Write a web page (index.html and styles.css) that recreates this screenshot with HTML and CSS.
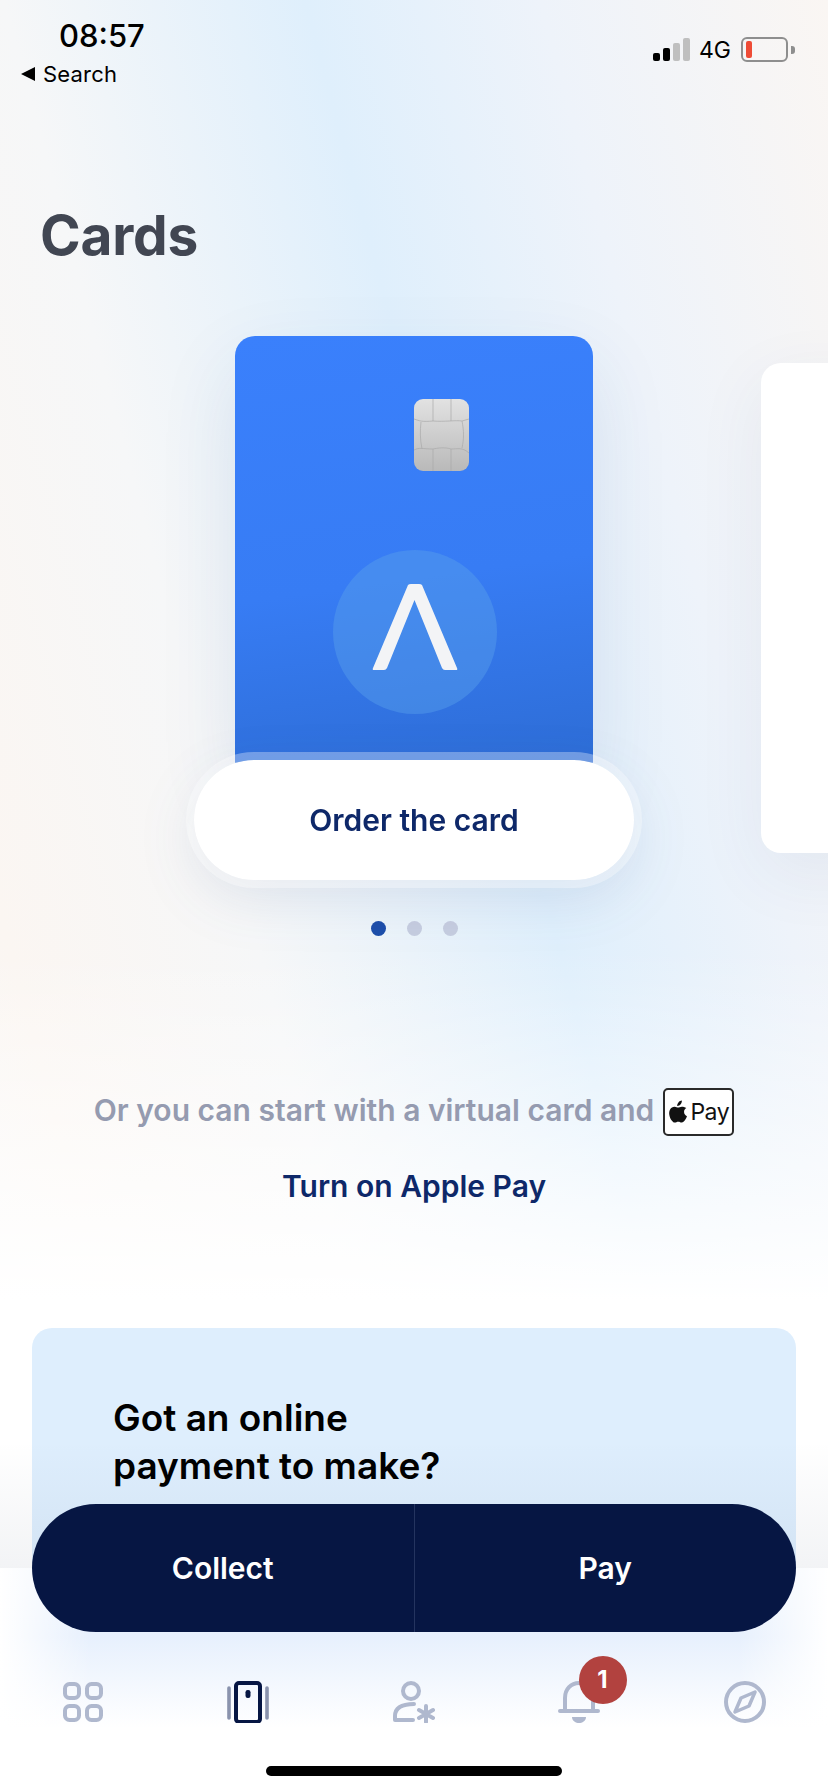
FILE: index.html
```html
<!DOCTYPE html>
<html lang="en">
<head>
<meta charset="UTF-8">
<meta name="viewport" content="width=device-width, initial-scale=1.0">
<title>Cards</title>
<link rel="stylesheet" href="styles.css">
</head>
<body>
<div class="screen">
  <header class="statusBar">
    <div class="statusLeft">
      <div class="clock">08:57</div>
      <div class="backLink"><span class="backArrow"></span>Search</div>
    </div>
    <div class="statusRight">
      <div class="signal">
        <span class="bar on b1"></span><span class="bar on b2"></span><span class="bar b3"></span><span class="bar b4"></span>
      </div>
      <span class="network">4G</span>
      <div class="battery"><span class="batteryFill"></span></div>
      <span class="batteryNub"></span>
    </div>
  </header>

  <h1 class="pageTitle">Cards</h1>

  <section class="carousel">
    <div class="slide">
      <div class="card">
        <svg class="chip" viewBox="0 0 55 72" aria-hidden="true">
          <defs>
            <linearGradient id="chipFill" x1="0" y1="0" x2="0" y2="1">
              <stop offset="0" stop-color="#e2e2e2"/>
              <stop offset="1" stop-color="#b9b9b9"/>
            </linearGradient>
          </defs>
          <rect width="55" height="72" rx="9" fill="url(#chipFill)"/>
          <g fill="none" stroke="#a9a9a9" stroke-width=".7">
            <path d="M19 0V22M37 0V22M19 50V72M37 50V72"/>
            <path d="M0 20C6 22 8 23 19 22C30 23 42 21 48 22L55 20"/>
            <path d="M0 51C6 48 8 50 19 50C28 48 34 49 37 50C44 50 48 48 55 54"/>
            <path d="M7 23C6 32 6 40 8 50M48 22C50 32 50 40 48 49"/>
          </g>
        </svg>
        <div class="logoDisc">
          <svg class="logoMark" viewBox="0 0 86 88" aria-hidden="true">
            <path d="M36 2Q37 1 39 1H47Q49 1 50 2L85 85Q86 87 84 87H73Q71 87 70 85L42.500 17L15 85Q14 87 12 87H2Q0 87 1 85Z" fill="#f3f4f6"/>
          </svg>
        </div>
      </div>
      <button class="orderBtn" type="button">Order the card</button>
    </div>
    <div class="nextCard"></div>
  </section>

  <div class="dots">
    <span class="dot active"></span><span class="dot"></span><span class="dot"></span>
  </div>

  <p class="virtualLine">
    <span class="virtualText">Or you can start with a virtual card and</span>
    <span class="payBadge">
      <svg class="appleLogo" viewBox="0 0 20 24" aria-hidden="true">
        <path d="M14.6 0.5C14.7 2 14.2 3.400 13.300 4.400C12.400 5.500 11 6.300 9.700 6.200C9.500 4.800 10.200 3.300 11 2.400C11.900 1.300 13.400 0.600 14.600 0.500ZM19.300 8.300C17.700 9.300 16.800 10.800 16.900 12.600C17 14.700 18.200 16.200 20 17C19.500 18.500 18.800 19.900 17.800 21.200C16.900 22.400 15.900 23.600 14.400 23.600C13 23.600 12.500 22.800 10.800 22.800C9.100 22.800 8.600 23.600 7.200 23.600C5.700 23.700 4.600 22.300 3.700 21.100C1.700 18.300 0.200 13.300 2.200 9.800C3.200 8.100 5 7 6.900 7C8.300 6.900 9.700 7.900 10.600 7.900C11.500 7.900 13.100 6.800 14.900 6.900C15.700 7 17.800 7.200 19.300 8.300Z" fill="#111"/>
      </svg>
      <span class="payWord">Pay</span>
    </span>
  </p>
  <a class="applePayLink">Turn on Apple Pay</a>

  <section class="promo">
    <h2 class="promoTitle">Got an online<br>payment to make?</h2>
  </section>

  <div class="dock">
    <div class="actionPill">
      <button class="actionBtn" type="button">Collect</button>
      <button class="actionBtn" type="button">Pay</button>
    </div>
    <nav class="tabBar">
      <div class="tab">
        <svg class="tabIcon" viewBox="0 0 42 42" fill="none" stroke="#afb8ce" stroke-width="4">
          <rect x="3" y="3" width="14" height="14" rx="4.500"/><rect x="25" y="3" width="14" height="14" rx="4.500"/>
          <rect x="3" y="25" width="14" height="14" rx="4.500"/><rect x="25" y="25" width="14" height="14" rx="4.500"/>
        </svg>
      </div>
      <div class="tab">
        <svg class="tabIcon" viewBox="0 0 42 42" fill="none" stroke-linecap="round">
          <path d="M2 7V37M40 7V37" stroke="#8a93ad" stroke-width="3.600"/>
          <rect x="9" y="2" width="24" height="39" rx="3" stroke="#061643" stroke-width="4"/>
          <rect x="18.500" y="9" width="5" height="8" rx="2.200" fill="#061643"/>
        </svg>
      </div>
      <div class="tab">
        <svg class="tabIcon" viewBox="0 0 42 42" fill="none" stroke="#afb8ce" stroke-width="4" stroke-linecap="round">
          <circle cx="18" cy="10" r="8"/>
          <path d="M2 39V35C2 27 9 23 21 23M2 39H20"/>
          <path d="M33 25V41M26 29L40 37M40 29L26 37"/>
        </svg>
      </div>
      <div class="tab">
        <svg class="tabIcon" viewBox="0 0 42 42" fill="none" stroke="#afb8ce" stroke-width="4" stroke-linecap="round">
          <path d="M7 29V17C7 8 13 2 21 2C29 2 35 8 35 17V29"/>
          <path d="M2 30H40"/>
          <path d="M14 36H28C28 40 24 42 21 42C18 42 14 40 14 36Z" fill="#afb8ce" stroke="none"/>
        </svg>
        <span class="badge">1</span>
      </div>
      <div class="tab">
        <svg class="tabIcon" viewBox="0 0 42 42" fill="none" stroke="#afb8ce" stroke-width="4" stroke-linejoin="round">
          <circle cx="21" cy="21" r="19"/>
          <path d="M31 11L25 25L11 31L17 17Z" stroke-width="3.500"/>
        </svg>
      </div>
    </nav>
    <div class="homeBar"></div>
  </div>
</div>
</body>
</html>
```

FILE: styles.css
```css
html, body { margin:0; padding:0; }
body { width:828px; height:1792px; overflow:hidden; font-family:Inter,"Open Sans",sans-serif; background:#fff; }
button { font-family:inherit; border:none; cursor:pointer; padding:0; }

.screen { position:relative; width:828px; height:1792px; overflow:hidden; background:linear-gradient(to bottom, rgba(255,255,255,0) 950px, #fff 1300px), linear-gradient(75deg, #f8f8f8 0%, #fbf6f2 18%, #f6f7f8 37%, #dfeffc 60%, #eef3fa 78%, #faf6f3 100%); }

.statusBar { display:flex; justify-content:space-between; align-items:flex-start; height:96px; box-sizing:border-box; padding:20px 33px 0 21px; color:#000; }
.clock { font-size:31px; font-weight:500; line-height:32px; margin-left:38px; }
.backLink { display:flex; align-items:center; gap:8px; font-size:22px; line-height:26px; margin-top:9px; letter-spacing:.2px; }
.backArrow { width:0; height:0; border-style:solid; border-width:7px 14px 7px 0; border-color:transparent #000 transparent transparent; }
.statusRight { display:flex; align-items:center; margin-top:17px; height:25px; }
.signal { display:flex; align-items:flex-end; gap:3px; height:23px; margin-right:9px; }
.bar { width:7px; border-radius:2px; background:#bfbfbf; }
.bar.on { background:#000; }
.b1 { height:8px; }
.b2 { height:13px; }
.b3 { height:18px; }
.b4 { height:23px; }
.network { font-size:23px; margin-right:10px; }
.battery { box-sizing:border-box; width:47px; height:25px; border:2px solid #8e8e8e; border-radius:6px; padding:2px 3px; }
.batteryFill { display:block; width:6px; height:100%; background:#ee4b36; border-radius:2px; }
.batteryNub { width:4px; height:8px; margin-left:3px; background:#8e8e8e; border-radius:0 3px 3px 0; }

.pageTitle { margin:109px 0 0 40px; font-size:55px; font-weight:700; line-height:60px; color:#414652; letter-spacing:-.2px; }

.carousel { display:flex; align-items:flex-start; margin:71px 0 0 186px; height:552px; }
.slide { display:flex; flex-direction:column; align-items:center; width:456px; }
.card { box-sizing:border-box; display:flex; flex-direction:column; align-items:center; width:358px; height:436px; padding-top:63px; border-radius:20px 20px 0 0; background:linear-gradient(172deg, #3a80fc 0%, #377cf4 55%, #2d6cd4 100%); box-shadow:0 30px 80px rgba(40,70,130,.1); }
.chip { width:55px; height:72px; margin-left:54px; }
.logoDisc { display:flex; align-items:center; justify-content:center; width:164px; height:164px; margin-top:79px; margin-right:-1px; border-radius:50%; background:rgba(88,160,235,.45); }
.logoMark { width:86px; height:88px; margin-top:-10px; }
.orderBtn { position:relative; box-sizing:border-box; width:456px; height:136px; margin-top:-20px; border:8px solid rgba(255,255,255,.32); background-clip:padding-box; background-color:#fff; border-radius:68px; font-size:30px; font-weight:600; color:#0e2869; filter:drop-shadow(0 18px 26px rgba(40,70,130,.1)); }
.nextCard { width:120px; height:490px; margin:27px 0 0 119px; flex:none; background:#fff; border-radius:20px 0 0 20px; box-shadow:0 20px 70px rgba(40,70,130,.07); }

.dots { display:flex; justify-content:center; gap:21px; margin-top:33px; }
.dot { width:15px; height:15px; border-radius:50%; background:#c6cde0; }
.dot.active { background:#1d4eaa; }

.virtualLine { display:flex; align-items:center; justify-content:center; gap:9px; margin:152px 0 0; height:48px; font-size:30px; font-weight:600; color:#959bb0; white-space:nowrap; }
.virtualText { margin-top:-4px; }
.payBadge { display:flex; align-items:center; justify-content:center; gap:3px; box-sizing:border-box; width:71px; height:48px; border:2px solid #2a2a2a; border-radius:5px; background:#fff; }
.appleLogo { width:19px; height:23px; margin-top:-2px; }
.payWord { font-size:23px; font-weight:400; color:#111; letter-spacing:-.5px; }
.applePayLink { display:block; margin-top:26px; text-align:center; font-size:30px; font-weight:600; line-height:48px; color:#0e2869; }

.promo { margin:118px 32px 0; height:400px; box-sizing:border-box; padding:66px 0 0 81px; border-radius:20px; background:#deeefd; }
.promoTitle { margin:0; font-size:37px; font-weight:600; line-height:48px; color:#000; }

.dock { position:absolute; left:0; right:0; top:1440px; height:352px; background:linear-gradient(to bottom, rgba(10,30,70,0) 0, rgba(10,30,70,.05) 128px, rgba(255,255,255,0) 128px) no-repeat, linear-gradient(to right, #fff 0, rgba(255,255,255,0) 90px, rgba(255,255,255,0) 738px, #fff 828px) no-repeat 0 128px / 100% 224px, linear-gradient(to bottom, #eef4fd 0, #e7f0fd 68px, #fff 160px) no-repeat 0 128px / 100% 224px; }
.actionPill { display:flex; height:128px; margin:64px 32px 0; border-radius:64px; background:#061643; overflow:hidden; }
.actionBtn { flex:1; background:transparent; color:#fff; font-size:30px; font-weight:600; }
.actionBtn + .actionBtn { border-left:1px solid #24345f; }
.tabBar { display:grid; grid-template-columns:repeat(5, 165.5px); margin-top:49px; }
.tab { position:relative; display:flex; justify-content:center; }
.tabIcon { height:42px; width:auto; display:block; }
.badge { position:absolute; left:82px; top:-25px; width:48px; height:48px; border-radius:50%; background:#b2423f; color:#fff; font-size:24px; font-weight:700; line-height:48px; text-align:center; }
.homeBar { width:296px; height:10px; margin:43px auto 0; border-radius:5px; background:#000; }
```
